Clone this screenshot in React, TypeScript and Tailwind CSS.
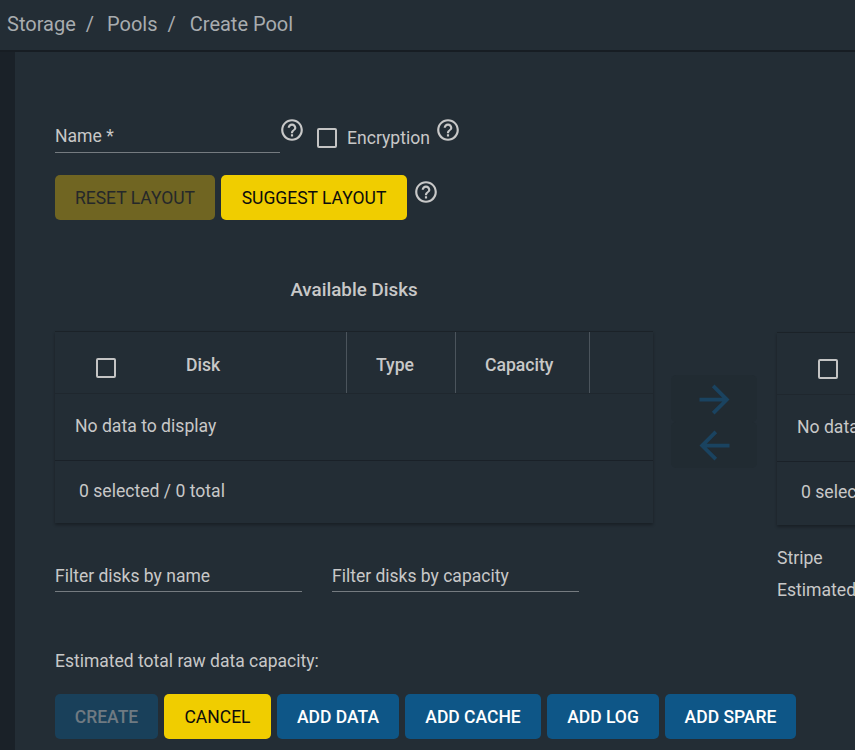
import React from "react";

const Help = ({ className = "" }: { className?: string }) => (
  <svg viewBox="0 0 24 24" className={`h-[26px] w-[26px] shrink-0 fill-[#c8c8c8] ${className}`}>
    <path d="M11 18h2v-2h-2v2zm1-16C6.48 2 2 6.48 2 12s4.48 10 10 10 10-4.48 10-10S17.52 2 12 2zm0 18c-4.41 0-8-3.59-8-8s3.59-8 8-8 8 3.59 8 8-3.59 8-8 8zm0-14c-2.21 0-4 1.79-4 4h2c0-1.1.9-2 2-2s2 .9 2 2c0 2-3 1.75-3 5h2c0-2.25 3-2.5 3-5 0-2.21-1.79-4-4-4z" />
  </svg>
);

const Check = ({ className = "" }: { className?: string }) => (
  <span className={`block h-5 w-5 shrink-0 rounded-[2px] border-2 border-[#c4c4c4] ${className}`} />
);

const Btn = ({ w, tone, children }: { w: string; tone: string; children: React.ReactNode }) => (
  <div className={`flex h-[45px] items-center justify-center rounded-[5px] pt-[1px] text-[17.5px] ${w} ${tone}`}>{children}</div>
);

const Arrow = ({ left }: { left?: boolean }) => (
  <div className="flex h-[46.5px] w-[86px] items-center justify-center rounded-[5px] bg-[#212b32] pt-[2px]">
    <svg viewBox="0 0 24 24" className={`h-[45px] w-[45px] fill-[#1a4360] ${left ? "rotate-180" : ""}`}>
      <path d="M12 4l-1.41 1.41L16.17 11H4v2h12.17l-5.58 5.59L12 20l8-8z" />
    </svg>
  </div>
);

const HeadCell = ({ w, children }: { w: string; children?: React.ReactNode }) => (
  <div className={`flex h-full items-center border-r border-[#4b545c] pb-0 pl-[29px] pt-[6px] text-[17.6px] font-medium text-[#c8c8c8] ${w}`}>
    {children}
  </div>
);

export default function App() {
  return (
    <div
      className="h-[750px] w-[855px] overflow-hidden bg-[#232d35] text-[#c8c8c8]"
      style={{ fontFamily: "Roboto, sans-serif" }}
    >
      <header className="flex h-[52px] items-center border-b-[2px] border-[#171d23] pb-[2px] pl-[7px] text-[20px] text-[#a8acaf]">
        <span>Storage</span>
        <span className="mx-[10px]">/</span>
        <span className="ml-[3px]">Pools</span>
        <span className="mx-[10px]">/</span>
        <span className="ml-[4px]">Create Pool</span>
      </header>
      <div className="flex h-[698px]">
        <aside className="w-[15px] shrink-0 bg-[#1a2128]" />
        <main className="w-[840px] shrink-0 pl-10">
          <div className="flex pt-[62px]">
            <div className="flex h-[39px] w-[225px] items-center border-b border-[#757b80] pt-[6px] text-[17.6px] text-[#c8c8c8]">Name *</div>
            <Help className="ml-[-1px] mt-[3px]" />
            <div className="ml-[12px] mt-[14px] flex h-5 items-center">
              <Check />
              <span className="ml-[10px] text-[17.6px]">Encryption</span>
            </div>
            <Help className="ml-[5px] mt-[3px]" />
          </div>
          <div className="mt-[22px] flex items-start gap-[6px]">
            <Btn w="w-[160px]" tone="bg-[#706522] text-[#25282a]">RESET LAYOUT</Btn>
            <Btn w="w-[186px]" tone="bg-[#f0cd00] text-[#0c0c0c]">SUGGEST LAYOUT</Btn>
            <Help className="mt-[4px]" />
          </div>

          <div className="mt-[58px] flex items-start">
            <div className="w-[598px] shrink-0">
              <div className="text-center text-[18.8px] font-medium leading-[24px] text-[#c8c8c8]">Available Disks</div>
              <div className="mt-[29px] border-t border-[#1b2228] shadow-[0_2px_3px_rgba(0,0,0,0.3)]">
                <div className="flex h-[62px] items-center border-b border-[#1f272e]">
                  <div className="flex h-full w-[292px] items-center border-r border-[#4b545c]">
                    <Check className="ml-[41px] mt-[10px]" />
                    <span className="ml-[70px] mt-[6px] text-[17.6px] font-medium">Disk</span>
                  </div>
                  <HeadCell w="w-[109px]">Type</HeadCell>
                  <HeadCell w="w-[134px]">Capacity</HeadCell>
                </div>
                <div className="flex h-[67px] items-center border-b border-[#1a2128] pb-[2px] pl-[20px] text-[17.6px]">No data to display</div>
                <div className="flex h-[62px] items-center pb-[2px] pl-[24px] text-[17.6px]">0 selected / 0 total</div>
              </div>
              <div className="mt-[39px] flex gap-[30px]">
                <div className="flex h-[30px] w-[247px] items-center border-b border-[#757b80] text-[17.5px]">Filter disks by name</div>
                <div className="flex h-[30px] w-[247px] items-center border-b border-[#757b80] text-[17.5px]">Filter disks by capacity</div>
              </div>
            </div>

            <div className="ml-[18px] mt-[97px] shrink-0">
              <Arrow />
              <Arrow left />
            </div>

            <div className="ml-[20px] mt-[54px] w-[500px] shrink-0">
              <div className="border-t border-[#1b2228] shadow-[0_2px_3px_rgba(0,0,0,0.3)]">
                <div className="flex h-[62px] items-center border-b border-[#1f272e]">
                  <Check className="ml-[41px] mt-[10px]" />
                </div>
                <div className="flex h-[67px] items-center border-b border-[#1a2128] pb-[2px] pl-[20px] text-[17.6px]">No data to display</div>
                <div className="flex h-[63px] items-center pb-[2px] pl-[24px] text-[17.6px]">0 selected / 0 total</div>
              </div>
              <div className="mt-[21px] text-[17.6px] leading-[24px]">Stripe</div>
              <div className="mt-[8px] text-[17.6px] leading-[24px]">Estimated raw capacity:</div>
            </div>
          </div>

          <div className="mt-[47px] text-[17.5px] leading-[24px] text-[#c8c8c8]">Estimated total raw data capacity:</div>
          <div className="mt-[21px] flex gap-[6px] font-medium">
            <Btn w="w-[103px]" tone="bg-[#19405a] text-[#6f7a82]">CREATE</Btn>
            <Btn w="w-[107px]" tone="bg-[#f0cd00] text-[#0c0c0c] font-normal">CANCEL</Btn>
            <Btn w="w-[122px]" tone="bg-[#0e5687] text-white">ADD DATA</Btn>
            <Btn w="w-[136px]" tone="bg-[#0e5687] text-white">ADD CACHE</Btn>
            <Btn w="w-[112px]" tone="bg-[#0e5687] text-white">ADD LOG</Btn>
            <Btn w="w-[131px]" tone="bg-[#0e5687] text-white">ADD SPARE</Btn>
          </div>
        </main>
      </div>
    </div>
  );
}
